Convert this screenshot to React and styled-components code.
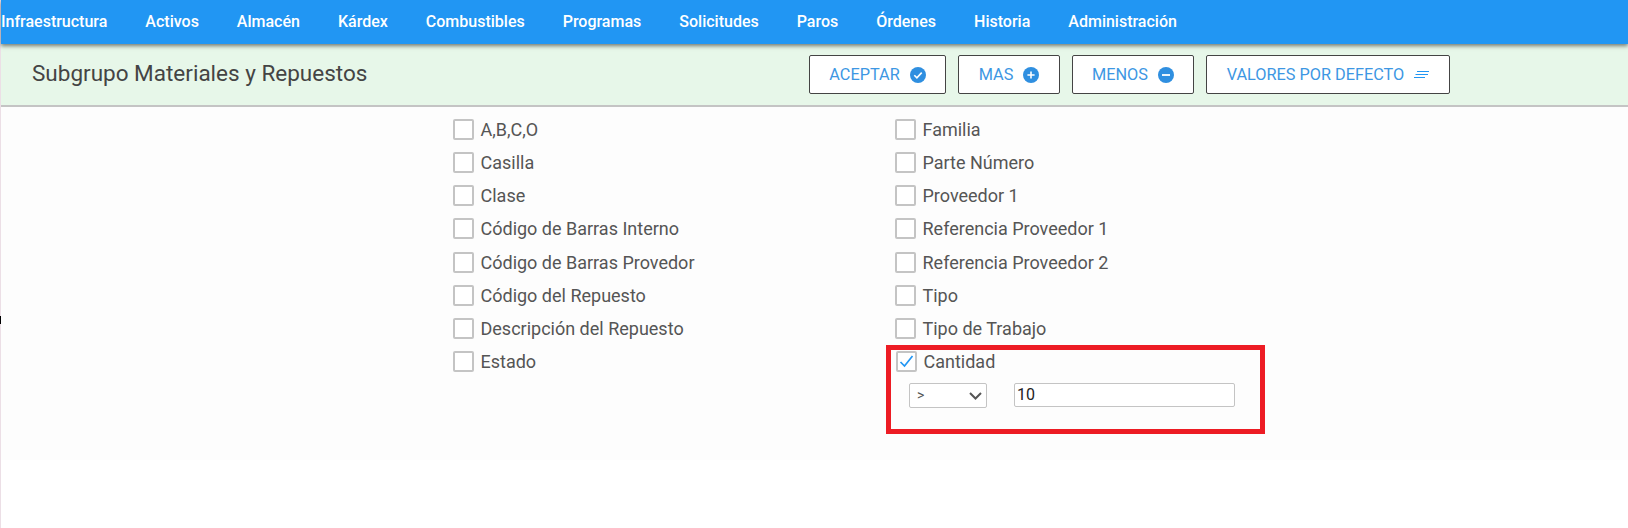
import styled, { createGlobalStyle } from "styled-components";

const GlobalStyle = createGlobalStyle`
  html, body {
    margin: 0;
    padding: 0;
    background: #fff;
  }
  body {
    font-family: Roboto, "Liberation Sans", sans-serif;
  }
`;

const menuItems = [
  "Infraestructura",
  "Activos",
  "Almacén",
  "Kárdex",
  "Combustibles",
  "Programas",
  "Solicitudes",
  "Paros",
  "Órdenes",
  "Historia",
  "Administración",
];

const leftFields = [
  "A,B,C,O",
  "Casilla",
  "Clase",
  "Código de Barras Interno",
  "Código de Barras Provedor",
  "Código del Repuesto",
  "Descripción del Repuesto",
  "Estado",
];

const rightFields = [
  "Familia",
  "Parte Número",
  "Proveedor 1",
  "Referencia Proveedor 1",
  "Referencia Proveedor 2",
  "Tipo",
  "Tipo de Trabajo",
];

const CheckIcon = () => (
  <svg width="16" height="16" viewBox="0 0 16 16">
    <circle cx="8" cy="8" r="8" fill="#2f8fe0" />
    <path d="M4.3 8.2l2.6 2.6 4.8-5.2" fill="none" stroke="#fff" strokeWidth="1.6" />
  </svg>
);

const PlusIcon = () => (
  <svg width="16" height="16" viewBox="0 0 16 16">
    <circle cx="8" cy="8" r="8" fill="#2f8fe0" />
    <path d="M8 4.4v7.2M4.4 8h7.2" fill="none" stroke="#fff" strokeWidth="1.6" />
  </svg>
);

const MinusIcon = () => (
  <svg width="16" height="16" viewBox="0 0 16 16">
    <circle cx="8" cy="8" r="8" fill="#2f8fe0" />
    <path d="M4 8h8" fill="none" stroke="#fff" strokeWidth="1.8" />
  </svg>
);

const LinesIcon = () => (
  <svg width="15" height="9" viewBox="0 0 15 9">
    <path d="M3 1.5h12M1.5 4.5h12.5M0 7.5h11" fill="none" stroke="#2196f3" strokeWidth="1.2" />
  </svg>
);

const Field = ({ label, checked, compact }) => (
  <FieldRow $compact={compact}>
    <Box>
      {checked && (
        <svg width="17" height="17" viewBox="0 0 17 17">
          <path d="M2.5 9l4 4 8-10" fill="none" stroke="#2196f3" strokeWidth="1.7" />
        </svg>
      )}
    </Box>
    <FieldLabel>{label}</FieldLabel>
  </FieldRow>
);

const App = () => {
  return (
    <Page>
      <GlobalStyle />
      <EdgeMark />
      <Menu>
        {menuItems.map((item) => (
          <MenuItem key={item}>{item}</MenuItem>
        ))}
      </Menu>
      <TitleBar>
        <Title>Subgrupo Materiales y Repuestos</Title>
        <Actions>
          <ActionButton $width={137}>
            ACEPTAR <CheckIcon />
          </ActionButton>
          <ActionButton $width={102}>
            MAS <PlusIcon />
          </ActionButton>
          <ActionButton $width={122}>
            MENOS <MinusIcon />
          </ActionButton>
          <ActionButton $width={244}>
            VALORES POR DEFECTO <LinesIcon />
          </ActionButton>
        </Actions>
      </TitleBar>
      <Content>
        <Column>
          {leftFields.map((field) => (
            <Field key={field} label={field} />
          ))}
        </Column>
        <Column>
          {rightFields.map((field) => (
            <Field key={field} label={field} />
          ))}
          <Highlight>
            <Field label="Cantidad" checked compact />
            <FilterRow>
              <SelectWrap>
                <OperatorSelect defaultValue=">">
                  <option value=">">&gt;</option>
                  <option value="<">&lt;</option>
                  <option value="=">=</option>
                </OperatorSelect>
                <Chevron width="13" height="8" viewBox="0 0 13 8">
                  <path d="M1 1l5.5 5.5L12 1" fill="none" stroke="#555" strokeWidth="2" />
                </Chevron>
              </SelectWrap>
              <ValueInput defaultValue="10" />
            </FilterRow>
          </Highlight>
        </Column>
      </Content>
    </Page>
  );
};

const Page = styled.div`
  position: relative;
  min-height: 528px;
  border-left: 1px solid #ecdfe6;
  box-sizing: border-box;
`;

const EdgeMark = styled.span`
  position: absolute;
  top: 316px;
  left: -1px;
  width: 1px;
  height: 8px;
  background: #000;
`;

const Menu = styled.nav`
  display: flex;
  align-items: center;
  gap: 38px;
  height: 44px;
  background: #2196f3;
  box-shadow: 0 2px 4px rgba(0, 0, 0, 0.5);
  position: relative;
`;

const MenuItem = styled.a`
  color: #fff;
  font-size: 16px;
  font-weight: 500;
  line-height: 1;
  margin-top: -1px;
`;

const TitleBar = styled.div`
  display: flex;
  align-items: center;
  height: 61px;
  padding-left: 31px;
  background: #e7f7e9;
  border-bottom: 2px solid #c4c4c4;
`;

const Title = styled.h1`
  width: 777px;
  margin: 0 0 4px;
  color: #444;
  font-size: 22.5px;
  font-weight: 400;
`;

const Actions = styled.div`
  display: flex;
  gap: 12px;
`;

const ActionButton = styled.button`
  display: flex;
  align-items: center;
  justify-content: center;
  gap: 10px;
  width: ${(props) => props.$width}px;
  height: 39px;
  padding: 0;
  background: #fff;
  border: 1px solid #444;
  border-radius: 2px;
  color: #3d97e3;
  font-family: Roboto, sans-serif;
  font-size: 16.3px;
`;

const Content = styled.div`
  display: flex;
  height: 353px;
  padding: 6px 0 0 452px;
  box-sizing: border-box;
  background: #fdfdfd;
`;

const Column = styled.div`
  width: 442px;
`;

const FieldRow = styled.label`
  display: flex;
  align-items: center;
  gap: 6.5px;
  height: ${(props) => (props.$compact ? 24 : 33.15)}px;
`;

const Box = styled.span`
  display: block;
  width: 21px;
  height: 21px;
  box-sizing: border-box;
  background: #fff;
  border: 2px solid #c4c4c4;
  border-radius: 2px;

  svg {
    display: block;
  }
`;

const FieldLabel = styled.span`
  color: #555;
  font-size: 18px;
`;

const Highlight = styled.div`
  width: 379px;
  height: 89px;
  margin-left: -9px;
  padding: 0 0 0 5px;
  box-sizing: border-box;
  border: 5px solid #ed1c24;
`;

const FilterRow = styled.div`
  display: flex;
  align-items: flex-start;
  gap: 27px;
  margin: 9px 0 0 13px;
`;

const SelectWrap = styled.div`
  position: relative;
  height: 25px;
`;

const OperatorSelect = styled.select`
  display: block;
  width: 78px;
  height: 25px;
  padding: 0 7px;
  appearance: none;
  background: #fff;
  border: 1px solid #c4c4c4;
  border-radius: 2px;
  color: #555;
  font-family: Roboto, sans-serif;
  font-size: 14px;
`;

const Chevron = styled.svg`
  position: absolute;
  top: 9px;
  right: 5px;
  pointer-events: none;
`;

const ValueInput = styled.input`
  width: 221px;
  height: 24px;
  padding: 0 2px;
  box-sizing: border-box;
  border: 1px solid #c4c4c4;
  border-radius: 2px;
  color: #222;
  font-family: Roboto, sans-serif;
  font-size: 16px;
`;

export default App;
